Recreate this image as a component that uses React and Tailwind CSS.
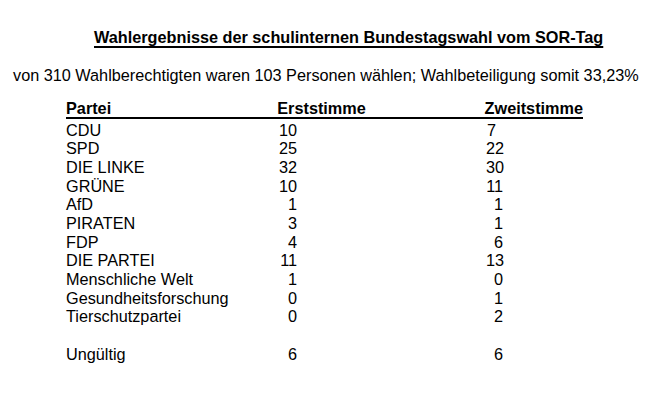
export default function App() {
  const rows = [
    ["CDU", "10", "7", true],
    ["SPD", "25", "22"],
    ["DIE LINKE", "32", "30"],
    ["GRÜNE", "10", "11"],
    ["AfD", "1", "1"],
    ["PIRATEN", "3", "1"],
    ["FDP", "4", "6"],
    ["DIE PARTEI", "11", "13"],
    ["Menschliche Welt", "1", "0"],
    ["Gesundheitsforschung", "0", "1"],
    ["Tierschutzpartei", "0", "2"],
  ];
  const Row = ({ name, a, b, left }) => (
    <div className="flex h-[18.7px] leading-[18.7px]">
      <div className="w-[212px]">{name}</div>
      <div className="w-[208px]">
        <div className="w-[19px] text-right">{a}</div>
      </div>
      <div className={left ? "w-[18px] pl-[1px] text-left" : "w-[17px] text-right"}>{b}</div>
    </div>
  );
  return (
    <div
      className="w-[659px] h-[417px] bg-white text-black text-[16.25px] flex flex-col"
      style={{ fontFamily: '"Liberation Sans", Arial, sans-serif' }}
    >
      <div className="mt-[27px] h-[20px] leading-[20px] pl-[94px] font-bold underline underline-offset-[3px] decoration-[1.5px] whitespace-nowrap">
        Wahlergebnisse der schulinternen Bundestagswahl vom SOR-Tag
      </div>
      <div className="mt-[18px] h-[20px] leading-[20px] pl-[13px] whitespace-nowrap">
        von 310 Wahlberechtigten waren 103 Personen wählen; Wahlbeteiligung somit 33,23%
      </div>
      <div className="ml-[66px] mt-[14px] flex flex-col">
        <div className="flex w-[517px] h-[20px] leading-[18px] font-bold border-b-2 border-black">
          <div className="w-[212px]">Partei</div>
          <div className="w-[208px]">Erststimme</div>
          <div>Zweitstimme</div>
        </div>
        <div className="mt-[1.6px] flex flex-col">
          {rows.map(([n, a, b, l]) => (
            <Row key={n} name={n} a={a} b={b} left={l} />
          ))}
          <div className="h-[18.7px]" />
          <Row name="Ungültig" a="6" b="6" />
        </div>
      </div>
    </div>
  );
}
